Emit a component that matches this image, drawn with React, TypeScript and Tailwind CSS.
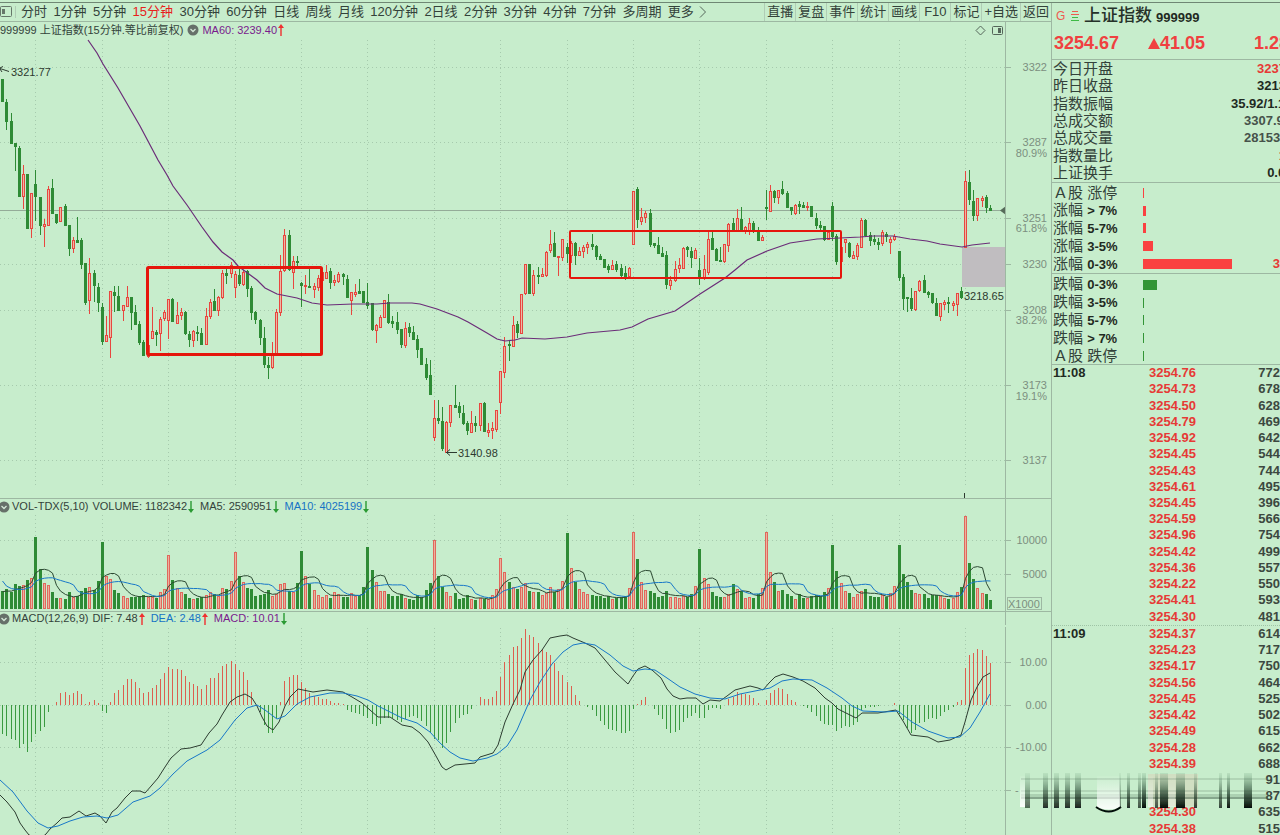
import { useState } from "react";

type Side = "r" | "g";
type Candle = { side: Side; high: number; top: number; bottom: number; low: number };

const UP = "#e8463f";
const DOWN = "#2e8b35";
const GRID = "#a6caad";
const LINE = "#9db8a2";

// side, high, body top, body bottom, low
const rawCandles = `
g 79 79 101 101|g 99 102 121 129|g 113 121 143 143|g 143 143 146 170|g 146 148 196 196|r 165 174 196 208|g 174 174 228 228|r 193 193 228 237
g 170 184 196 220|g 197 197 225 234|r 219 224 226 246|r 186 189 225 225|g 179 188 213 213|g 214 214 222 223|r 207 207 221 221|g 204 206 225 225
g 225 225 248 255|r 237 240 248 252|g 217 240 242 242|g 238 240 264 268|g 263 263 302 304|r 258 273 300 313|g 270 273 285 301|g 283 287 302 311
g 303 307 341 344|r 316 335 341 341|r 291 291 337 357|g 286 292 295 311|g 286 296 310 310|r 305 305 310 320|r 286 297 306 306|g 297 297 312 329
g 305 312 324 324|g 321 324 342 344|g 340 342 355 355|r 340 345 356 357|r 307 331 338 338|g 330 332 334 345|r 317 319 333 350|r 310 312 318 320
r 299 299 320 338|g 298 299 321 321|r 302 315 323 323|r 308 312 315 319|g 311 312 333 334|g 331 334 339 346|r 330 331 340 346|g 326 332 333 340
g 328 333 344 344|r 308 316 344 344|r 299 302 316 318|g 289 301 310 310|r 296 297 310 315|r 270 273 297 298|g 268 273 275 283|r 262 265 273 277
r 271 274 287 297|g 269 275 283 285|r 270 272 284 285|g 270 271 288 296|g 286 288 312 319|g 311 312 319 323|g 319 320 337 344|g 327 338 364 367
g 357 365 367 378|r 342 353 367 368|r 309 312 353 354|r 255 271 312 315|r 229 235 270 271|g 230 235 269 270|r 256 261 272 288|g 256 261 262 266
g 282 283 285 306|r 275 285 286 293|g 269 286 287 287|r 283 286 289 297|r 275 278 287 290|r 270 272 280 284|r 265 272 278 278|g 268 271 282 288
r 275 280 282 285|r 272 274 281 282|g 273 274 276 284|g 275 279 297 297|r 292 292 300 314|r 284 292 294 296|g 279 291 293 293|g 291 291 302 302
g 283 302 305 308|g 303 303 329 330|r 324 325 330 342|r 315 317 327 327|r 300 300 317 317|g 294 302 322 323|g 316 321 323 327|g 312 322 329 333
g 329 329 344 347|r 322 328 345 347|g 323 327 332 336|g 326 332 339 339|g 335 339 349 357|g 348 348 364 364|g 358 364 377 379|g 360 375 394 394
r 400 418 437 440|g 400 418 420 423|g 407 421 448 450|r 421 422 452 452|r 405 405 422 426|g 385 405 407 407|g 402 406 412 417|g 405 413 423 424
g 421 423 430 434|r 411 423 432 432|g 416 423 425 431|r 403 403 425 430|g 402 403 431 431|r 423 430 432 436|r 422 428 430 438|r 410 410 429 431
r 371 371 402 413|r 337 346 372 377|g 341 344 345 360|r 316 325 346 346|g 321 324 332 337|r 294 294 333 333|r 264 264 293 294|g 264 264 293 293
r 270 275 293 295|g 267 275 276 283|r 268 274 276 276|r 251 252 275 276|r 230 244 250 252|g 232 243 256 256|r 256 256 257 275|r 239 239 257 260
g 243 247 253 262|r 241 243 255 262|g 242 243 255 264|r 247 251 255 255|r 245 247 251 257|r 242 244 247 253|g 234 244 246 249|g 245 246 256 259
g 254 256 259 259|g 259 259 267 267|g 264 266 269 272|r 260 265 269 269|g 261 264 269 271|g 264 268 275 276|g 266 273 277 279|r 267 268 276 276
r 191 191 244 244|g 187 189 219 227|r 208 217 221 224|r 211 213 217 222|g 209 213 244 246|g 243 243 245 247|g 237 245 253 253|g 247 253 256 256
g 251 255 284 288|r 276 280 285 289|r 261 269 280 281|r 258 265 268 272|r 247 248 268 268|g 246 247 249 256|g 247 251 257 267|r 248 250 258 258
g 258 270 278 284|r 255 269 277 279|r 230 239 272 274|g 232 238 249 249|g 248 249 260 260|g 247 260 261 261|r 244 244 261 262|r 223 224 245 251
g 218 223 230 230|r 209 218 230 231|g 207 219 231 231|r 226 227 231 233|r 218 223 230 234|g 221 223 230 232|g 227 231 240 240|r 235 237 240 240
g 190 207 208 219|r 185 191 211 211|g 190 191 197 202|r 190 190 197 203|g 181 189 193 194|g 191 193 207 207|g 207 207 210 214|r 204 205 213 214
g 201 204 206 213|g 202 205 207 207|r 202 206 207 210|g 206 206 216 216|g 213 218 225 228|g 221 225 227 230|g 226 226 239 240|r 230 232 239 239
g 202 206 236 240|g 234 236 261 264|r 239 247 261 265|r 239 239 242 252|g 242 243 256 257|r 251 255 258 258|r 243 245 256 259|r 218 220 247 247
g 219 220 235 236|g 232 235 240 245|g 235 239 241 244|g 238 242 244 249|r 230 232 243 245|g 232 234 236 241|r 237 239 242 253|r 234 236 239 240
g 251 251 277 280|g 274 277 298 309|g 297 297 298 311|g 288 298 308 310|r 291 291 309 310|r 280 281 290 291|g 275 280 292 292|g 291 292 294 297
g 293 293 302 303|g 298 303 315 315|r 303 303 316 320|r 300 302 304 309|g 297 302 303 312|r 301 303 305 310|r 293 293 304 315|g 287 291 297 298
r 171 181 247 247|g 170 182 199 204|g 190 201 215 220|r 198 198 215 220|r 196 198 200 206|g 195 197 207 212|g 205 208 210 210`;

const candles: Candle[] = rawCandles
  .trim()
  .split(/[|\n]/)
  .map((row) => {
    const [side, ...n] = row.split(" ");
    const [high, top, bottom, low] = n.map(Number);
    return { side: side as Side, high, top, bottom, low };
  });

// bar tops, in thirds of a pixel
const volume = [
  288, 282, 290, 268, 273, 270, 255, 248, 126, 222, 263, 270, 290, 309, 310, 313, 290, 305, 302, 287, 279, 275, 285, 257,
  140, 243, 253, 284, 293, 303, 308, 305, 305, 304, 301, 306, 306, 308, 292, 282, 180, 255, 279, 291, 297, 308, 312, 309,
  307, 300, 292, 298, 302, 280, 282, 258, 170, 242, 262, 279, 283, 303, 300, 298, 285, 304, 296, 267, 264, 288, 290, 265,
  167, 243, 268, 286, 300, 306, 301, 308, 292, 298, 305, 305, 295, 303, 300, 276, 156, 224, 260, 287, 289, 298, 304, 303,
  296, 309, 313, 315, 301, 305, 284, 265, 135, 243, 275, 292, 304, 294, 312, 308, 301, 312, 314, 309, 313, 312, 301, 283,
  188, 232, 262, 275, 282, 277, 265, 288, 292, 292, 301, 294, 277, 290, 282, 258, 115, 219, 262, 281, 290, 297, 300, 303,
  303, 309, 303, 313, 310, 305, 302, 280, 112, 192, 262, 285, 288, 294, 306, 303, 287, 306, 306, 309, 302, 306, 298, 273,
  162, 250, 268, 292, 304, 306, 306, 296, 267, 282, 288, 309, 306, 309, 298, 280, 110, 232, 262, 287, 285, 297, 303, 312,
  298, 309, 309, 303, 301, 303, 292, 280, 150, 227, 264, 289, 294, 306, 297, 287, 281, 303, 306, 306, 299, 307, 294, 273,
  150, 238, 260, 284, 294, 297, 297, 309, 300, 300, 302, 309, 311, 308, 291, 276, 63, 205, 251, 279, 294, 297, 316,
];
const volumeBefore = [130, 215, 250, 265, 270, 290, 290, 292, 290];

const macd = [
  717, 722, 733, 735, 760, 747, 770, 742, 717, 709, 697, 650, 631, 622, 595, 591, 599, 594, 587, 597, 627, 620, 615, 624,
  648, 653, 621, 593, 585, 570, 552, 553, 562, 578, 593, 592, 580, 571, 552, 534, 517, 523, 522, 525, 543, 561, 567, 574,
  583, 570, 550, 549, 535, 514, 508, 498, 507, 524, 532, 555, 590, 629, 650, 690, 714, 713, 670, 622, 559, 547, 540, 541,
  562, 578, 595, 602, 607, 612, 611, 619, 624, 625, 628, 646, 651, 653, 656, 664, 668, 688, 693, 688, 668, 668, 668, 675,
  682, 672, 665, 664, 670, 678, 692, 712, 731, 735, 758, 743, 711, 684, 668, 659, 656, 641, 631, 605, 612, 611, 606, 587,
  547, 502, 479, 455, 454, 430, 402, 419, 427, 443, 462, 471, 479, 503, 528, 541, 561, 574, 601, 619, 629, 636, 646, 663,
  678, 690, 702, 704, 707, 713, 715, 708, 641, 626, 615, 607, 631, 641, 661, 671, 702, 715, 711, 704, 682, 669, 664, 653,
  668, 668, 645, 638, 638, 642, 631, 611, 606, 590, 597, 597, 599, 609, 624, 631, 614, 595, 585, 580, 583, 597, 614, 622,
  629, 634, 638, 650, 662, 678, 688, 690, 690, 707, 698, 692, 696, 690, 680, 645, 638, 636, 636, 634, 631, 629, 630, 624,
  656, 675, 700, 715, 704, 685, 681, 672, 670, 673, 662, 652, 645, 637, 622, 614, 520, 480, 473, 463, 464, 484, 503,
];

const ma60 =
  "88,40 97,53 103,64 118,88 140,126 158,160 167,175 173,186 187,205 202,227 213,242 222,252 233,260 238,266 257,280 265,288 277,294 297,298 312,303 327,305 353,304 377,304 390,303 412,303 420,304 437,309 458,317 468,322 487,333 497,339 505,341 515,340 522,338 545,339 567,337 587,333 620,330 632,327 648,319 675,311 700,294 725,278 735,270 747,260 767,251 790,243 817,239 840,238 860,237 873,236 893,236 910,239 927,241 940,244 962,247 972,245 990,243";

const dif =
  "0,795 7,802 15,812 20,823 25,830 29,835 40,839 46,834 50,829 57,823 62,818 70,817 79,811 86,816 95,813 100,816 106,823 112,812 117,808 125,798 132,791 140,791 145,793 152,785 158,778 165,767 171,758 181,749 190,748 201,745 209,733 217,724 222,715 230,702 237,697 245,694 252,698 257,706 262,717 267,726 273,730 279,722 285,706 290,697 298,689 313,692 327,690 343,692 352,697 362,703 370,710 378,717 390,717 402,725 412,727 420,733 428,742 436,756 442,767 446,770 455,765 475,763 480,757 493,753 498,745 505,722 513,704 520,690 525,672 533,660 542,650 550,638 560,636 567,635 573,638 585,643 595,648 605,660 615,672 628,684 633,676 638,669 645,666 652,670 661,678 667,689 673,696 680,699 687,698 696,698 703,704 710,700 720,701 727,696 735,690 750,686 758,688 763,690 769,683 775,677 783,674 793,677 803,681 815,688 825,698 832,703 838,709 850,715 856,718 862,713 878,713 890,711 896,710 903,721 911,735 928,737 938,742 950,740 961,735 965,722 971,700 977,687 983,677 990,673";

const dea =
  "0,780 13,792 27,811 38,823 48,828 58,826 70,821 83,817 97,816 107,818 118,815 133,802 150,796 160,788 173,774 187,761 207,750 220,740 235,720 247,708 257,705 265,710 277,719 285,716 297,704 310,697 330,693 343,693 357,696 368,700 378,706 390,712 402,718 417,723 430,732 440,743 450,752 460,758 473,761 487,758 497,754 507,746 517,730 530,700 540,682 552,664 563,652 573,645 583,643 595,645 610,655 623,666 633,671 645,669 655,670 667,678 680,687 695,694 710,698 725,699 740,694 755,691 770,688 782,681 793,679 812,680 827,688 842,698 852,706 863,711 885,712 898,711 912,722 928,731 948,738 960,737 970,728 980,712 990,694";

const barX = (i: number) => Math.floor(2.8 + i * 4.1496) + 0.5;
const levelY = (v: number) => 495 + v / 3;
const days = Array.from({ length: 15 }, (_, k) => barX(8 + k * 16));

const average = (span: number) => {
  const all = [...volumeBefore, ...volume];
  return volume
    .map((_, i) => {
      const end = i + volumeBefore.length + 1;
      const window = all.slice(Math.max(end - span, 0), end);
      const sum = window.reduce((a, b) => a + b, 0);
      return `${barX(i)},${levelY(sum / window.length).toFixed(1)}`;
    })
    .join(" ");
};

const Grid = ({ rows, from, to }: { rows: number[]; from: number; to: number }) => (
  <g stroke={GRID} strokeDasharray="1 3" shapeRendering="crispEdges">
    {rows.map((y) => (
      <line key={y} x1={0} x2={1006} y1={y + 0.5} y2={y + 0.5} />
    ))}
    {days.map((x) => (
      <line key={x} x1={x} x2={x} y1={from} y2={to} />
    ))}
  </g>
);

const Axis = ({ from, to, labels, sub }: { from: number; to: number; labels: [number, string][]; sub?: [number, string][] }) => (
  <g className="text-[11px]" fill="#7c8f80">
    <g stroke={LINE} shapeRendering="crispEdges">
      <line x1={1005.5} x2={1005.5} y1={from} y2={to} />
      {labels.map(([y]) => (
        <line key={y} x1={1006} x2={1011} y1={y + 0.5} y2={y + 0.5} />
      ))}
    </g>
    {labels.map(([y, text]) => (
      <text key={y} x={1047} y={y + 4} textAnchor="end">{text}</text>
    ))}
    {sub?.map(([y, text]) => (
      <text key={y} x={1047} y={y + 4} textAnchor="end">{text}</text>
    ))}
  </g>
);

const PriceChart = () => (
  <svg viewBox="0 38 1051 460" className="block w-full" role="img" aria-label="K线">
    <Grid rows={[67, 142, 218, 264, 310, 385, 460]} from={40} to={488} />
    <line x1={0} x2={1006} y1={210.5} y2={210.5} stroke="#94ab98" />
    <rect x={962} y={247} width={44} height={40} fill="#c0bdc0" />
    <g shapeRendering="crispEdges">
      {candles.map((c, i) => {
        const x = barX(i);
        const color = c.side === "r" ? UP : DOWN;
        return (
          <g key={i} stroke={color}>
            <line x1={x} x2={x} y1={c.high} y2={c.low + 1} />
            {c.side === "r" ? (
              <rect x={x - 1} y={c.top + 0.5} width={2} height={Math.max(c.bottom - c.top, 1)} fill="#e9b9a4" />
            ) : (
              <rect x={x - 1.5} y={c.top} width={3} height={c.bottom - c.top + 1} fill={color} stroke="none" />
            )}
          </g>
        );
      })}
    </g>
    <polyline points={ma60} fill="none" stroke="#6b2c78" strokeWidth={1.2} />
    <g fill="none" stroke="#e5160c">
      <rect x={147.5} y={267.5} width={174} height={87} strokeWidth={3} rx={1} />
      <rect x={570} y={231} width={271} height={47} strokeWidth={2} rx={1} />
    </g>
    <g className="text-[11px]" fill="#2c3a2f">
      <text x={11} y={76}>3321.77</text>
      <text x={458} y={457}>3140.98</text>
      <text x={964} y={300}>3218.65</text>
    </g>
    <g fill="none" stroke="#2c3a2f">
      <path d="M0 68.5L9 71.5M0 68L3 66.5M0 69L2 72" />
      <path d="M446 452.5H457M450 449.5L446.500 452.500L450 455.500" />
      <path d="M964.500 493V498" />
    </g>
    <path d="M1006 206V215L1000 210.500Z" fill="#566b5a" />
    <Axis
      from={38}
      to={498}
      labels={[[67, "3322"], [142, "3287"], [218, "3251"], [264, "3230"], [310, "3208"], [385, "3173"], [460, "3137"]]}
      sub={[[153, "80.9%"], [228, "61.8%"], [320, "38.2%"], [396, "19.1%"]]}
    />
  </svg>
);

const VolumeChart = () => (
  <svg viewBox="0 514 1051 97" className="block w-full" role="img" aria-label="成交量">
    <Grid rows={[540, 574]} from={515} to={609} />
    <g shapeRendering="crispEdges">
      {volume.map((v, i) => {
        const x = barX(i);
        const y = Math.round(levelY(v));
        // an opening gap counts as a rise even on a flat candle
        const up = candles[i].side === "r" || i === 184;
        return up ? (
          <rect key={i} x={x - 1} y={y + 0.5} width={2} height={608 - y} fill="#ecb19e" stroke="#e0685c" />
        ) : (
          <rect key={i} x={x - 1.5} y={y} width={3} height={609 - y} fill={DOWN} />
        );
      })}
    </g>
    <polyline points={average(5)} fill="none" stroke="#2d4a33" />
    <polyline points={average(10)} fill="none" stroke="#1878c8" />
    <Axis from={514} to={611} labels={[[540, "10000"], [574, "5000"]]} />
    <rect x={1007.5} y={597.5} width={34} height={12} fill="none" stroke={LINE} />
    <text x={1008} y={608} className="text-[11px]" fill="#7c8f80">X1000</text>
  </svg>
);

const MacdChart = () => (
  <svg viewBox="0 627 1051 208" className="block w-full" role="img" aria-label="MACD">
    <Grid rows={[662, 705, 747, 790]} from={628} to={834} />
    <g shapeRendering="crispEdges">
      {macd.map((v, i) => (
        <line key={i} x1={barX(i)} x2={barX(i)} y1={705} y2={Math.round(levelY(v))} stroke={v < 631 ? "#dc5f4f" : "#3a9a40"} />
      ))}
    </g>
    <polyline points={dif} fill="none" stroke="#2d3d31" />
    <polyline points={dea} fill="none" stroke="#1878c8" />
    <Axis from={627} to={835} labels={[[662, "10.00"], [705, "0.00"], [747, "-10.00"], [790, ""]]} />
    <text x={1015} y={794} className="text-[11px]" fill="#7c8f80">-</text>
  </svg>
);

const Fold = () => (
  <button aria-label="指标菜单" className="shrink-0">
    <svg width="12" height="12" viewBox="0 0 12 12" className="block">
      <circle cx="6" cy="6" r="5.500" fill="#667069" />
      <path d="M3.500 5L6 7.500L8.500 5" fill="none" stroke="#d5e8d8" strokeWidth="1.300" />
    </svg>
  </button>
);

const Arrow = ({ up = false }: { up?: boolean }) => (
  <svg width="6" height="12" viewBox="0 0 6 12" className="ml-px shrink-0">
    {up ? (
      <path d="M3 0L6 4H3.700V12H2.300V4H0Z" fill="#f03030" />
    ) : (
      <path d="M3 12L6 8H3.700V0H2.300V8H0Z" fill="#2a9a33" />
    )}
  </svg>
);

const periods = ["分时", "1分钟", "5分钟", "15分钟", "30分钟", "60分钟", "日线", "周线", "月线", "120分钟", "2日线", "2分钟", "3分钟", "4分钟", "7分钟", "多周期", "更多"];
const tools = ["直播", "复盘", "事件", "统计", "画线", "F10", "标记", "+自选", "返回"];

const Toolbar = () => {
  const [period, setPeriod] = useState("15分钟");

  return (
    <nav className="flex h-[19px] items-center justify-between border-b border-[#9db8a2] text-[13px] leading-[18px] whitespace-nowrap text-[#33423a]">
      <div className="flex items-center">
        <button aria-label="侧栏" className="mr-[5px] border-r border-[#b0cdb5] pr-[3px]">
          <svg width="12" height="12" viewBox="0 0 12 12" fill="none" className="block">
            <rect x="0.500" y="0.500" width="11" height="10" rx="1" stroke="#66776a" />
            <rect x="2" y="3" width="3" height="5" fill="#66776a" />
          </svg>
        </button>
        <div className="flex w-[673px] justify-between">
          {periods.map((p) => (
            <button key={p} onClick={() => setPeriod(p)} className={p === period ? "text-[#e8201c]" : ""}>
              {p}
            </button>
          ))}
        </div>
        <svg width="8" height="12" viewBox="0 0 8 12" className="ml-[5px]">
          <path d="M1 0.500L6.500 6L1 11.500" fill="none" stroke="#55665a" />
        </svg>
      </div>
      <div className="flex">
        {tools.map((t) => (
          <button key={t} className="min-w-[31px] border-l border-[#b0cdb5] px-[2px]">
            {t}
          </button>
        ))}
      </div>
    </nav>
  );
};

const stats = [
  { name: "今日开盘", value: "3237.92", color: "text-[#e63a36]" },
  { name: "昨日收盘", value: "3213.62", color: "text-[#1f2a22]" },
  { name: "指数振幅", value: "35.92/1.12%", color: "text-[#1f2a22]" },
  { name: "总成交额", value: "3307.95亿", color: "text-[#46524a]" },
  { name: "总成交量", value: "28153.0万", color: "text-[#46524a]" },
  { name: "指数量比", value: "1.05", color: "text-[#e63a36]" },
  { name: "上证换手", value: "0.05%", color: "text-[#1f2a22]" },
];

const rises = [
  { name: "Ａ股", range: "涨停", width: 1 },
  { name: "涨幅", range: "> 7%", width: 3 },
  { name: "涨幅", range: "5-7%", width: 3 },
  { name: "涨幅", range: "3-5%", width: 10 },
  { name: "涨幅", range: "0-3%", width: 89, count: "3" },
];

const falls = [
  { name: "跌幅", range: "0-3%", width: 14 },
  { name: "跌幅", range: "3-5%", width: 1 },
  { name: "跌幅", range: "5-7%", width: 1 },
  { name: "跌幅", range: "> 7%", width: 1 },
  { name: "Ａ股", range: "跌停", width: 1 },
];

const ticks: string[][] = [
  ["11:08", "3254.76", "772"], ["", "3254.73", "678"], ["", "3254.50", "628"], ["", "3254.79", "469"],
  ["", "3254.92", "642"], ["", "3254.45", "544"], ["", "3254.43", "744"], ["", "3254.61", "495"],
  ["", "3254.45", "396"], ["", "3254.59", "566"], ["", "3254.96", "754"], ["", "3254.42", "499"],
  ["", "3254.36", "557"], ["", "3254.22", "550"], ["", "3254.41", "593"], ["", "3254.30", "481"],
  ["11:09", "3254.37", "614"], ["", "3254.23", "717"], ["", "3254.17", "750"], ["", "3254.56", "464"],
  ["", "3254.45", "525"], ["", "3254.42", "502"], ["", "3254.49", "615"], ["", "3254.28", "662"],
  ["", "3254.39", "688"], ["", "", "91"], ["", "", "87"], ["", "3254.30", "635"], ["", "3254.38", "515"],
];

const Breadth = ({ rows, bar }: { rows: { name: string; range: string; width: number; count?: string }[]; bar: string }) => (
  <div className="border-b border-[#9db8a2] pt-[2px]">
    <table className="h-[88px] w-full table-fixed text-[15px] leading-4">
      <tbody>
        {rows.map((r) => (
          <tr key={r.range}>
            <th scope="row" className="w-[91px] pl-[1px] text-left font-normal whitespace-nowrap text-[#33423a]">
              {r.name}{" "}
              <span className={r.name === "Ａ股" ? "" : "text-[13px] font-bold text-[#1f2a22]"}>{r.range}</span>
            </th>
            <td>
              <div className={`h-[10px] ${bar}`} style={{ width: r.width }} />
            </td>
            <td className="w-5 text-right text-[13px] font-bold text-[#e63a36]">{r.count}</td>
          </tr>
        ))}
      </tbody>
    </table>
  </div>
);

const QuotePanel = () => (
  <aside className="w-[229px] shrink-0 overflow-hidden border-l border-[#9db8a2]">
    <div className="flex h-[25px] items-center pl-1 whitespace-nowrap">
      <span className="w-[15px] text-[12px] text-[#ee5a50]">G</span>
      <svg width="8" height="11" viewBox="0 0 8 11" className="mr-[5px]">
        <path d="M1 1.500H7M0 4.500H8" stroke="#ee5a50" />
        <path d="M1 7.500H7M0 10.500H8" stroke="#3dba45" />
      </svg>
      <h1 className="text-[17px] font-medium text-[#263229]">上证指数</h1>
      <span className="mt-1 ml-1 text-[13px] font-bold text-[#1f2a22]">999999</span>
    </div>
    <div className="flex h-[32px] w-[253px] items-center justify-between border-b border-[#9db8a2] pl-[2px] text-[18px] font-bold text-[#f04040]">
      <span>3254.67</span>
      <span className="mr-5 flex items-center">
        <svg width="12" height="11" viewBox="0 0 12 11">
          <path d="M6 0L12 11H0Z" fill="#f04040" />
        </svg>
        41.05
      </span>
      <span>1.28%</span>
    </div>
    <table className="h-[123px] w-[252px] border-b border-[#9db8a2] text-[15px] leading-4">
      <tbody>
        {stats.map((s) => (
          <tr key={s.name}>
            <th scope="row" className="pl-[1px] text-left font-normal text-[#33423a]">{s.name}</th>
            <td className={`text-right text-[13px] font-bold ${s.color}`}>{s.value}</td>
          </tr>
        ))}
      </tbody>
    </table>
    <Breadth rows={rises} bar="bg-[#fa4141]" />
    <Breadth rows={falls} bar="bg-[#339536]" />
    <table className="h-[472px] w-full table-fixed text-[13px] leading-4 font-bold">
      <tbody>
        {ticks.map(([time, price, count], i) => (
          <tr key={i} className={i === 16 ? "border-t border-dotted border-[#9fc4a6]" : ""}>
            <td className="w-[97px] pl-[1px] text-[#1f2a22]">{time}</td>
            <td className="text-[#e63a36]">{price}</td>
            <td className="w-10 text-right text-[#3c4840]">{count}</td>
          </tr>
        ))}
      </tbody>
    </table>
  </aside>
);

// x, width, strength
const streaks = [
  [1025, 5, 0.6], [1043, 5, 0.85], [1054, 5, 0.85], [1065, 5, 0.85], [1075, 6, 0.9], [1119, 2, 0.5], [1127, 3, 0.85],
  [1138, 3, 0.7], [1142, 4, 1], [1155, 3, 0.7], [1160, 8, 1], [1176, 9, 1], [1194, 3, 0.8], [1219, 3, 0.75],
  [1227, 3, 0.95], [1244, 8, 1],
];

const Smear = () => (
  <svg width="260" height="50" viewBox="1014 770 260 50" className="absolute right-[6px] bottom-[15px]" aria-hidden="true">
    <defs>
      <linearGradient id="fade" x1="0" x2="0" y1="0" y2="1">
        <stop offset="0" stopColor="#5f8f6c" stopOpacity="0.150" />
        <stop offset="0.550" stopColor="#2c4a35" stopOpacity="0.750" />
        <stop offset="1" stopColor="#050c07" />
      </linearGradient>
      <linearGradient id="glow" x1="0" x2="0" y1="0" y2="1">
        <stop offset="0" stopColor="#fff" stopOpacity="0.050" />
        <stop offset="1" stopColor="#fff" stopOpacity="0.900" />
      </linearGradient>
      <filter id="soft" x="-10%" y="-10%" width="120%" height="120%">
        <feGaussianBlur stdDeviation="0.600 0.400" />
      </filter>
    </defs>
    <g filter="url(#soft)">
      <rect x={1148} y={774} width={50} height={32} fill="#f0b5a5" opacity={0.25} />
      <rect x={1021} y={778} width={247} height={2} fill="#6b8d73" opacity={0.25} />
      <rect x={1021} y={790} width={247} height={2} fill="#6b8d73" opacity={0.25} />
      <rect x={1021} y={794} width={247} height={5} fill="#5a7a62" opacity={0.25} />
      <rect x={1021} y={797} width={247} height={2} fill="#3b5542" opacity={0.35} />
      {streaks.map(([x, w, o]) => (
        <rect key={x} x={x} y={773} width={w} height={35} fill="url(#fade)" opacity={o} />
      ))}
      <path d="M1097 776H1120V807Q1109 812 1097 807Z" fill="url(#glow)" />
      <path d="M1096 807Q1109 816 1121 807" fill="none" stroke="#050c07" strokeWidth={2} />
      <rect x={1020} y={776} width={5} height={31} fill="url(#glow)" />
      <rect x={1148} y={776} width={5} height={31} fill="url(#glow)" opacity={0.6} />
      <rect x={1169} y={776} width={6} height={31} fill="url(#glow)" opacity={0.4} />
    </g>
  </svg>
);

export default function App() {
  return (
    <div className="relative h-screen overflow-hidden bg-[#c7edcc] font-['Liberation_Sans','Noto_Sans_CJK_SC',sans-serif]">
      <div className="h-[3px] border-b border-[#6f8774]" />
      <div className="flex">
        <main className="min-w-0 flex-1">
          <Toolbar />
          <div className="flex h-4 items-center justify-between text-[11px] leading-4 text-[#33423a]">
            <div className="flex items-center">
              <span>999999 上证指数(15分钟.等比前复权)</span>
              <span className="mr-[3px] ml-1 flex"><Fold /></span>
              <span className="text-[#7a1a8c]">MA60: 3239.40</span>
              <Arrow up />
            </div>
            <div className="flex h-full items-center">
              <svg width="30" height="11" viewBox="0 0 30 11" fill="none" stroke="#55665a">
                <path d="M5.500 1L10 5.500L5.500 10L1 5.500Z" />
                <rect x="17.500" y="1.500" width="10" height="8" rx="1" />
                <path d="M24.500 3V8" strokeWidth="3" />
              </svg>
              <div className="h-full w-[46px] border-l border-[#9db8a2]" />
            </div>
          </div>
          <PriceChart />
          <div className="flex h-4 items-center border-t border-[#9db8a2] text-[11px] whitespace-nowrap text-[#33423a]">
            <div className="flex flex-1 items-center">
              <span className="-ml-[2px] flex"><Fold /></span>
              <span className="ml-[2px]">VOL-TDX(5,10)</span>
              <span className="ml-1">VOLUME: 1182342</span>
              <Arrow />
              <span className="ml-[6px]">MA5: 2590951</span>
              <Arrow />
              <span className="ml-[6px] text-[#1673c4]">MA10: 4025199</span>
              <Arrow />
            </div>
            <div className="h-full w-[46px] border-l border-[#9db8a2]" />
          </div>
          <VolumeChart />
          <div className="flex h-4 items-center border-t border-[#9db8a2] pb-[2px] text-[11px] whitespace-nowrap text-[#33423a]">
            <div className="flex flex-1 items-center">
              <span className="-ml-[2px] flex"><Fold /></span>
              <span className="ml-[2px]">MACD(12,26,9)</span>
              <span className="ml-1">DIF: 7.48</span>
              <Arrow up />
              <span className="ml-[6px] text-[#1673c4]">DEA: 2.48</span>
              <Arrow up />
              <span className="ml-[6px] text-[#7a1a8c]">MACD: 10.01</span>
              <Arrow />
            </div>
            <div className="h-full w-[46px] border-l border-[#9db8a2]" />
          </div>
          <MacdChart />
        </main>
        <QuotePanel />
      </div>
      <Smear />
    </div>
  );
}
